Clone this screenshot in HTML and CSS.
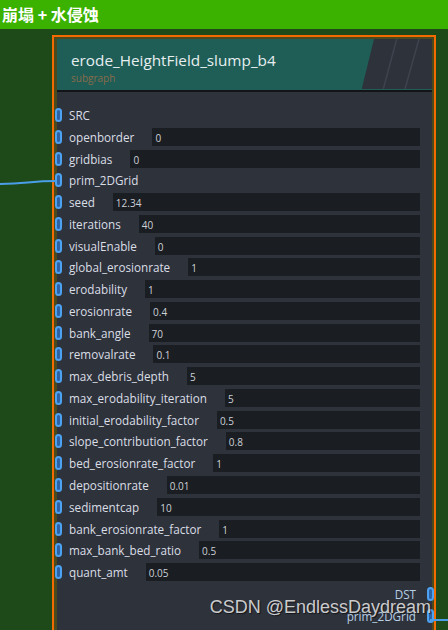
FILE: index.html
```html
<!DOCTYPE html>
<html>
<head>
<meta charset="utf-8">
<link rel="stylesheet" href="styles.css">
</head>
<body>
<div class="topbar">崩塌 + 水侵蚀</div>
<svg class="wire-in" width="60" height="200" viewBox="0 0 60 200"><path d="M0 184 C 28 183.5, 30 181, 57 181" fill="none" stroke="#4a9ee8" stroke-width="2"/></svg>
<svg class="wire-out" width="20" height="10" viewBox="0 0 20 10"><path d="M0 5 L20 5" fill="none" stroke="#4a9ee8" stroke-width="2"/></svg>
<div class="node">
  <div class="inner">
    <div class="header">
      <div class="title">erode_HeightField_slump_b4</div>
      <div class="subtitle">subgraph</div>
      <svg class="hdeco" width="375" height="50" viewBox="0 0 375 50">
        <polygon points="317,0 375,0 375,50 304.7,50" fill="#2e323b"/>
        <line x1="339.7" y1="0" x2="326.3" y2="50" stroke="#3f434d" stroke-width="1.5"/>
        <line x1="362" y1="0" x2="348" y2="50" stroke="#3f434d" stroke-width="1.5"/>
      </svg>
    </div>
    <div class="sep"></div>
    <div class="rows">
      <div class="row"><span class="port"></span><span class="label">SRC</span></div>
      <div class="row"><span class="port"></span><span class="label">openborder</span><span class="input">0</span></div>
      <div class="row"><span class="port"></span><span class="label">gridbias</span><span class="input">0</span></div>
      <div class="row"><span class="port"></span><span class="label">prim_2DGrid</span></div>
      <div class="row"><span class="port"></span><span class="label">seed</span><span class="input">12.34</span></div>
      <div class="row"><span class="port"></span><span class="label">iterations</span><span class="input">40</span></div>
      <div class="row"><span class="port"></span><span class="label">visualEnable</span><span class="input">0</span></div>
      <div class="row"><span class="port"></span><span class="label">global_erosionrate</span><span class="input">1</span></div>
      <div class="row"><span class="port"></span><span class="label">erodability</span><span class="input">1</span></div>
      <div class="row"><span class="port"></span><span class="label">erosionrate</span><span class="input">0.4</span></div>
      <div class="row"><span class="port"></span><span class="label">bank_angle</span><span class="input">70</span></div>
      <div class="row"><span class="port"></span><span class="label">removalrate</span><span class="input">0.1</span></div>
      <div class="row"><span class="port"></span><span class="label">max_debris_depth</span><span class="input">5</span></div>
      <div class="row"><span class="port"></span><span class="label">max_erodability_iteration</span><span class="input">5</span></div>
      <div class="row"><span class="port"></span><span class="label">initial_erodability_factor</span><span class="input">0.5</span></div>
      <div class="row"><span class="port"></span><span class="label">slope_contribution_factor</span><span class="input">0.8</span></div>
      <div class="row"><span class="port"></span><span class="label">bed_erosionrate_factor</span><span class="input">1</span></div>
      <div class="row"><span class="port"></span><span class="label">depositionrate</span><span class="input">0.01</span></div>
      <div class="row"><span class="port"></span><span class="label">sedimentcap</span><span class="input">10</span></div>
      <div class="row"><span class="port"></span><span class="label">bank_erosionrate_factor</span><span class="input">1</span></div>
      <div class="row"><span class="port"></span><span class="label">max_bank_bed_ratio</span><span class="input">0.5</span></div>
      <div class="row"><span class="port"></span><span class="label">quant_amt</span><span class="input">0.05</span></div>
      <div class="row out"><span class="label">DST</span><span class="port"></span></div>
      <div class="row out"><span class="label">prim_2DGrid</span><span class="port"></span></div>
    </div>
  </div>
</div>
<div class="watermark">CSDN @EndlessDaydream</div>
</body>
</html>
```
FILE: styles.css
```css
html, body {
  margin: 0;
  padding: 0;
}
body {
  width: 448px;
  height: 630px;
  overflow: hidden;
  background: #1e4918;
  position: relative;
  font-family: "Open Sans", "Noto Sans", sans-serif;
}
.topbar {
  height: 29px;
  background: #3cb200;
  color: #ffffff;
  font-family: "Noto Sans CJK SC", "Noto Sans", sans-serif;
  font-weight: bold;
  font-size: 16px;
  line-height: 28px;
  padding-left: 2px;
}
.wire-in {
  position: absolute;
  left: 0;
  top: 0;
}
.wire-out {
  position: absolute;
  left: 430px;
  top: 615px;
}
.node {
  margin: 6px 0 0 52px;
  width: 380px;
  height: 700px;
  border: 2px solid #f26a00;
}
.inner {
  height: 100%;
  border-style: solid;
  border-color: #4b4a1c;
  border-width: 2px 2px 0 3px;
  background: #2e323b;
}
.header {
  position: relative;
  height: 50px;
  background: #1e5e56;
  padding-left: 14px;
  box-sizing: border-box;
  overflow: hidden;
}
.title {
  padding-top: 11px;
  font-size: 15.3px;
  line-height: 20px;
  color: #e6eef0;
  position: relative;
  z-index: 1;
}
.subtitle {
  margin-top: 1px;
  font-size: 10px;
  line-height: 14px;
  color: #8a6b4c;
  position: relative;
  z-index: 1;
}
.hdeco {
  position: absolute;
  right: 0;
  top: 0;
}
.sep {
  height: 1px;
  background: #1e5e56;
  border-bottom: 2px solid #121418;
}
.rows {
  display: flex;
  flex-direction: column;
  gap: 3.77px;
  padding-top: 14px;
}
.row {
  display: flex;
  align-items: center;
  height: 18px;
}
.port {
  flex: none;
  width: 3px;
  height: 10px;
  margin-left: -2px;
  border: 2.5px solid #4ea2f2;
  border-radius: 4px;
  background: #2d62a4;
}
.label {
  margin-left: 7px;
  font-size: 11.7px;
  color: #dadee6;
  white-space: nowrap;
}
.input {
  flex: 1;
  height: 18px;
  margin-left: 18px;
  margin-right: 12px;
  background: #1a1d22;
  color: #cdd1d8;
  font-size: 10px;
  line-height: 20px;
  padding-left: 3px;
}
.row.out {
  justify-content: flex-end;
}
.row.out .label {
  margin-left: 0;
  margin-right: 11px;
  color: #b8cfe6;
}
.row.out .port {
  margin-left: 0;
  margin-right: -2px;
}
.watermark {
  position: absolute;
  right: 17px;
  top: 597px;
  font-family: "Liberation Sans", Arial, sans-serif;
  font-size: 18px;
  color: rgba(235, 235, 235, 0.85);
  text-shadow: 1px 1px 1px rgba(0, 0, 0, 0.6);
  white-space: nowrap;
}
```
